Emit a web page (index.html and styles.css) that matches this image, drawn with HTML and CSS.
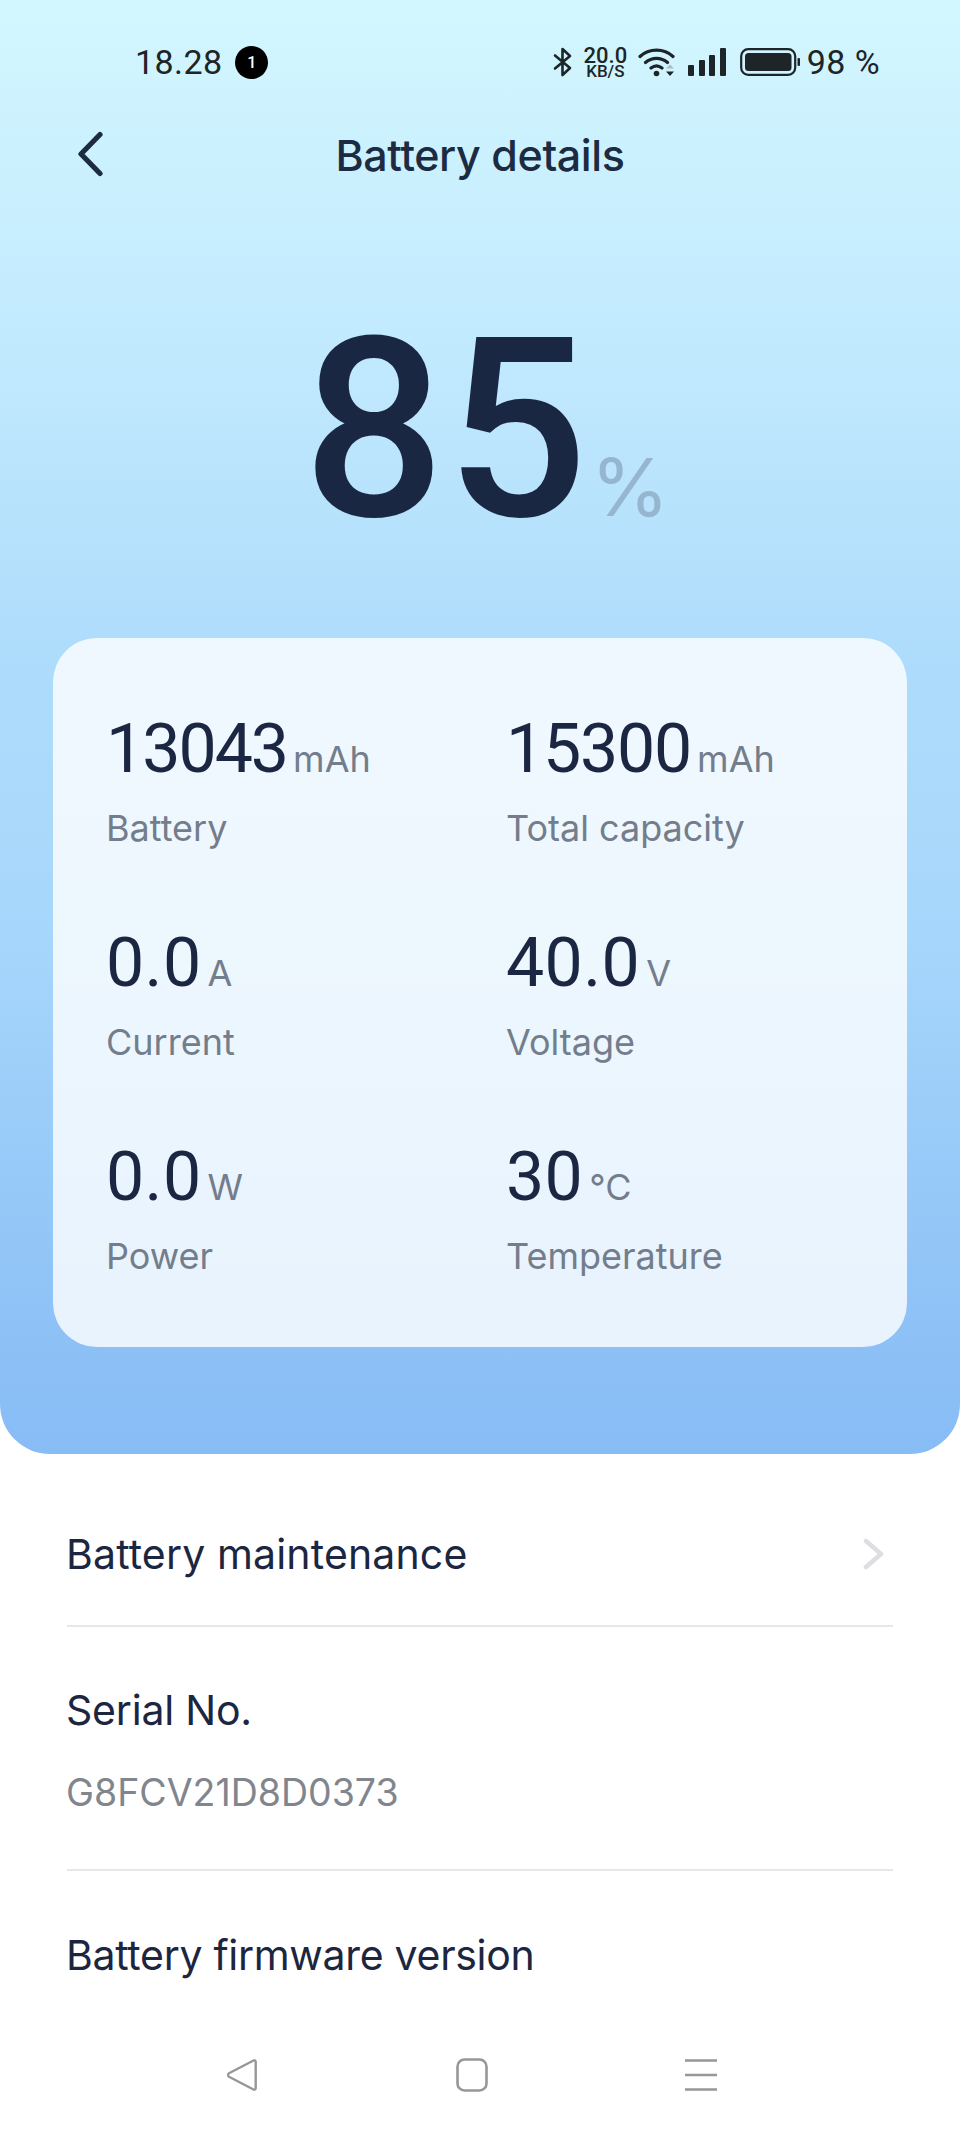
FILE: index.html
```html
<!DOCTYPE html>
<html lang="en">
<head>
<meta charset="utf-8">
<title>Battery details</title>
<link rel="stylesheet" href="styles.css">
</head>
<body>
<div class="screen">
  <main class="main">
    <section class="hero">
      <div class="statusbar">
        <div class="status-left">
          <span class="clock">18.28</span>
          <span class="badge">1</span>
        </div>
        <div class="status-right">
          <svg class="ic-bt" width="22" height="30" viewBox="0 0 22 30"><path d="M3 8.500 18 21 10.500 28V2L18 9 3 21.500" fill="none" stroke="#1d2528" stroke-width="2.600" stroke-linejoin="round" stroke-linecap="round"/></svg>
          <span class="speed"><span class="speed-num">20.0</span><span class="speed-unit">KB/S</span></span>
          <svg class="ic-wifi" width="38" height="30" viewBox="0 0 38 30"><path d="M2 9.500C11 1 26 1 35 9.500M7.500 15.500C14 10 23 10 29.500 15.500M13 21c3.500-2.800 7.500-2.800 11 0" fill="none" stroke="#1d2528" stroke-width="3.200" stroke-linecap="round"/><circle cx="18.500" cy="26.500" r="2.800" fill="#1d2528"/><path d="M28 21.500h8l-4-4z" fill="#a9bcc4"/><path d="M28 24.500h8l-4 4.500z" fill="#1d2528"/></svg>
          <svg class="ic-signal" width="38" height="28" viewBox="0 0 38 28"><rect x="0" y="17" width="6" height="11" rx="1" fill="#1d2528"/><rect x="11" y="12" width="6" height="16" rx="1" fill="#1d2528"/><rect x="21" y="7" width="6" height="21" rx="1" fill="#1d2528"/><rect x="32" y="0" width="6" height="28" rx="1" fill="#1d2528"/></svg>
          <svg class="ic-batt" width="60" height="28" viewBox="0 0 60 28"><rect x="1.200" y="1.200" width="54" height="25.600" rx="7" fill="none" stroke="#1d2528" stroke-width="2.200"/><rect x="5" y="5" width="46.500" height="18" rx="3.500" fill="#1d2528"/><rect x="57.500" y="10" width="2.500" height="8" rx="1" fill="#1d2528"/></svg>
          <span class="level">98 %</span>
        </div>
      </div>

      <header class="titlebar">
        <svg class="ic-back" width="30" height="46" viewBox="0 0 30 46"><path d="M25 3.500 6 23l19 19.500" fill="none" stroke="#1c2b41" stroke-width="5.200" stroke-linecap="round" stroke-linejoin="round"/></svg>
        <h1 class="title">Battery details</h1>
      </header>

      <div class="percent">
        <span class="percent-num">85</span><span class="percent-sign">%</span>
      </div>

      <div class="card">
        <div class="stat">
          <div class="stat-value"><span class="num num-tight">13043</span><span class="unit">mAh</span></div>
          <div class="stat-label">Battery</div>
        </div>
        <div class="stat">
          <div class="stat-value"><span class="num">15300</span><span class="unit">mAh</span></div>
          <div class="stat-label">Total capacity</div>
        </div>
        <div class="stat">
          <div class="stat-value"><span class="num num-wide">0.0</span><span class="unit">A</span></div>
          <div class="stat-label">Current</div>
        </div>
        <div class="stat">
          <div class="stat-value"><span class="num num-wide">40.0</span><span class="unit">V</span></div>
          <div class="stat-label">Voltage</div>
        </div>
        <div class="stat">
          <div class="stat-value"><span class="num num-wide">0.0</span><span class="unit">W</span></div>
          <div class="stat-label">Power</div>
        </div>
        <div class="stat">
          <div class="stat-value"><span class="num num-wide">30</span><span class="unit">°C</span></div>
          <div class="stat-label">Temperature</div>
        </div>
      </div>
    </section>

    <section class="list">
      <div class="row row-link">
        <span class="row-title">Battery maintenance</span>
        <svg class="ic-chev" width="22" height="32" viewBox="0 0 22 32"><path d="M3 3l15 13L3 29" fill="none" stroke="#dcdee2" stroke-width="4.500" stroke-linecap="round" stroke-linejoin="round"/></svg>
      </div>
      <div class="row row-info">
        <span class="row-title">Serial No.</span>
        <span class="row-sub">G8FCV21D8D0373</span>
      </div>
      <div class="row row-last">
        <span class="row-title">Battery firmware version</span>
      </div>
    </section>
  </main>

  <nav class="navbar">
    <svg width="32" height="34" viewBox="0 0 32 34"><path d="M27.500 2.500 3 15.300a2 2 0 0 0 0 3.400L27.500 31.500a1.500 1.500 0 0 0 2.200-1.300V3.800a1.500 1.500 0 0 0-2.200-1.300z" fill="none" stroke="#979797" stroke-width="2.400" stroke-linejoin="round"/></svg>
    <svg width="32" height="34" viewBox="0 0 32 34"><rect x="1.500" y="1.500" width="29" height="31" rx="7" fill="none" stroke="#979797" stroke-width="2.600"/></svg>
    <svg width="32" height="34" viewBox="0 0 32 34"><path d="M0 2.500h32M0 17h32M0 31.500h32" fill="none" stroke="#979797" stroke-width="2.600"/></svg>
  </nav>
</div>
</body>
</html>
```

FILE: styles.css
```css
* { box-sizing: border-box; }
html, body { margin: 0; padding: 0; background: #fff; }
body { font-family: Inter, "Liberation Sans", sans-serif; color: #1c2640; }

.screen { width: 960px; height: 2133px; display: flex; flex-direction: column; overflow: hidden; background: #fff; }
.main { flex: 1 1 auto; min-height: 0; overflow: hidden; }

.hero {
  height: 1454px;
  padding: 0 53px;
  border-radius: 0 0 50px 50px;
  background: linear-gradient(180deg, #d3f7ff 0%, #c1e9fe 25%, #aedcfb 45%, #a6d6fb 65%, #8fc2f6 90%, #87bcf5 100%);
}

.statusbar { height: 124px; padding: 0 27px 0 82px; display: flex; justify-content: space-between; align-items: center; color: #1d2528; }
.status-left { display: flex; align-items: center; gap: 13px; }
.clock { font-family: Roboto, sans-serif; font-size: 34px; font-weight: 450; letter-spacing: 0.4px; }
.badge { width: 33px; height: 33px; border-radius: 50%; background: #000; color: #fff; font-family: Roboto, sans-serif; font-size: 16px; font-weight: 500; display: flex; align-items: center; justify-content: center; }
.status-right { display: flex; align-items: center; }
.ic-bt { margin-right: 8px; }
.speed { display: flex; flex-direction: column; align-items: center; width: 47px; margin-right: 9px; font-family: Roboto, sans-serif; font-weight: 500; }
.speed-num { font-size: 22px; line-height: 17px; }
.speed-unit { font-size: 17px; line-height: 14px; }
.ic-wifi { margin-right: 12px; }
.ic-signal { margin-right: 14px; }
.ic-batt { margin-right: 7px; }
.level { font-family: Roboto, sans-serif; font-size: 34px; font-weight: 450; letter-spacing: 0.4px; }

.titlebar { position: relative; height: 64px; display: flex; align-items: center; justify-content: center; }
.ic-back { position: absolute; left: 22px; top: 7px; }
.title { margin: -2px 0 0; font-size: 43px; font-weight: 500; color: #1c2b41; letter-spacing: -0.4px; }

.percent { margin-top: 112px; height: 262px; display: flex; justify-content: center; align-items: baseline; padding-left: 12px; }
.percent-num { font-family: Roboto, sans-serif; font-size: 250px; line-height: 262px; font-weight: 470; letter-spacing: 1px; color: #1a2742; }
.percent-sign { font-size: 80px; font-weight: 400; color: #96b6cf; margin-left: 2px; }

.card {
  margin-top: 76px;
  height: 709px;
  padding: 73px 53px 0;
  border-radius: 44px;
  background: rgba(255, 255, 255, 0.8);
  display: grid;
  grid-template-columns: 400px 1fr;
  grid-auto-rows: 214px;
}
.stat-value { display: flex; align-items: baseline; height: 76px; }
.num { font-family: Roboto, sans-serif; font-size: 68px; font-weight: 440; line-height: 76px; letter-spacing: -1.200px; color: #1b2742; }
.num-tight { letter-spacing: -2px; }
.num-wide { letter-spacing: 0.400px; }
.unit { font-size: 36px; color: #737d8c; margin-left: 6px; }
.stat-label { font-size: 36px; line-height: 44px; margin-top: 19px; color: #737d8c; }

.list { padding: 0 67px; }
.row { border-bottom: 2px solid #e6e7ea; }
.row-link { height: 173px; display: flex; align-items: center; justify-content: space-between; padding: 28px 8px 0 0; }
.row-link .row-title { letter-spacing: 0.150px; }
.row-info { height: 244px; padding-top: 58px; display: flex; flex-direction: column; }
.row-last { border-bottom: 0; padding-top: 59px; }
.row-last .row-title { letter-spacing: -0.300px; }
.row-title { font-size: 41px; line-height: 50px; letter-spacing: -0.2px; margin-left: -1px; color: #1c2640; }
.row-sub { font-size: 37.500px; line-height: 50px; margin: 33px 0 0 -1px; color: #81858e; }

.navbar { flex: 0 0 130px; display: flex; justify-content: space-between; align-items: flex-start; padding: 55px 243px 0 226px; background: #fff; }
```
